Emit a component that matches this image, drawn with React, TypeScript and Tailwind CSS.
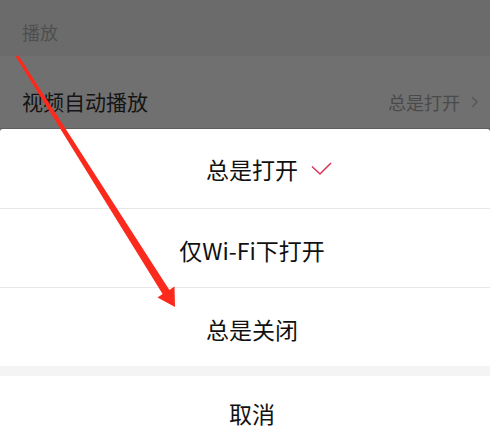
import React from "react";

const font = { fontFamily: '"Noto Sans CJK SC", "Noto Sans", sans-serif' };

export default function App() {
  return (
    <div
      className="relative w-[490px] h-[447px] overflow-hidden bg-[#707070]"
      style={font}
    >
      <div className="h-[56px] bg-[#6b6b6b] flex items-center pl-[22px] pt-[9px] text-[18px] text-[#4f4f4f]">
        播放
      </div>
      <div className="h-[92px] flex items-center justify-between pl-[22px] pr-[10px]">
        <span className="text-[21px] text-[#141414]">视频自动播放</span>
        <span className="flex items-center gap-[10px] text-[18px] text-[#4a4a4a]">
          总是打开
          <svg width="10" height="14" viewBox="0 0 10 14">
            <path d="M2 2 L7 7 L2 12" fill="none" stroke="#585858" strokeWidth="1.5" />
          </svg>
        </span>
      </div>

      <div className="absolute left-0 right-0 top-[128px] h-px bg-[#5e5e5e]" />
      <div className="absolute left-0 right-0 top-[129px] bottom-0 bg-white rounded-t-[3px] flex flex-col text-[23px] text-[#111]">
        <div className="h-[80px] flex items-center justify-center pl-[14px] pt-[2px]">
          <span className="relative">
            总是打开
            <svg
              className="absolute top-1/2 -translate-y-1/2 left-[calc(100%+13px)]"
              width="21"
              height="14"
              viewBox="0 0 21 14"
            >
              <path
                d="M1 4.5 L9 12 L20 1"
                fill="none"
                stroke="#dc3a58"
                strokeWidth="1.6"
              />
            </svg>
          </span>
        </div>
        <div className="h-[80px] border-t border-[#e6e6e6] flex items-center justify-center pl-[14px] pt-[4px]">
          仅Wi-Fi下打开
        </div>
        <div className="h-[80px] border-t border-[#e6e6e6] flex items-center justify-center pl-[14px] pt-[4px]">
          总是关闭
        </div>
        <div className="h-[10px] bg-[#f4f4f4]" />
        <div className="h-[72px] flex items-center justify-center pl-[14px] pt-[4px]">
          取消
        </div>
      </div>

      <svg
        className="absolute left-0 top-0 pointer-events-none"
        width="490"
        height="447"
        viewBox="0 0 490 447"
      >
        <polygon
          points="18.3,55.2 169.4,289.9 174.5,286.6 175,307 157.5,297.4 162.6,294.1 15.7,56.8"
          fill="#fb2a1c"
        />
      </svg>
    </div>
  );
}
